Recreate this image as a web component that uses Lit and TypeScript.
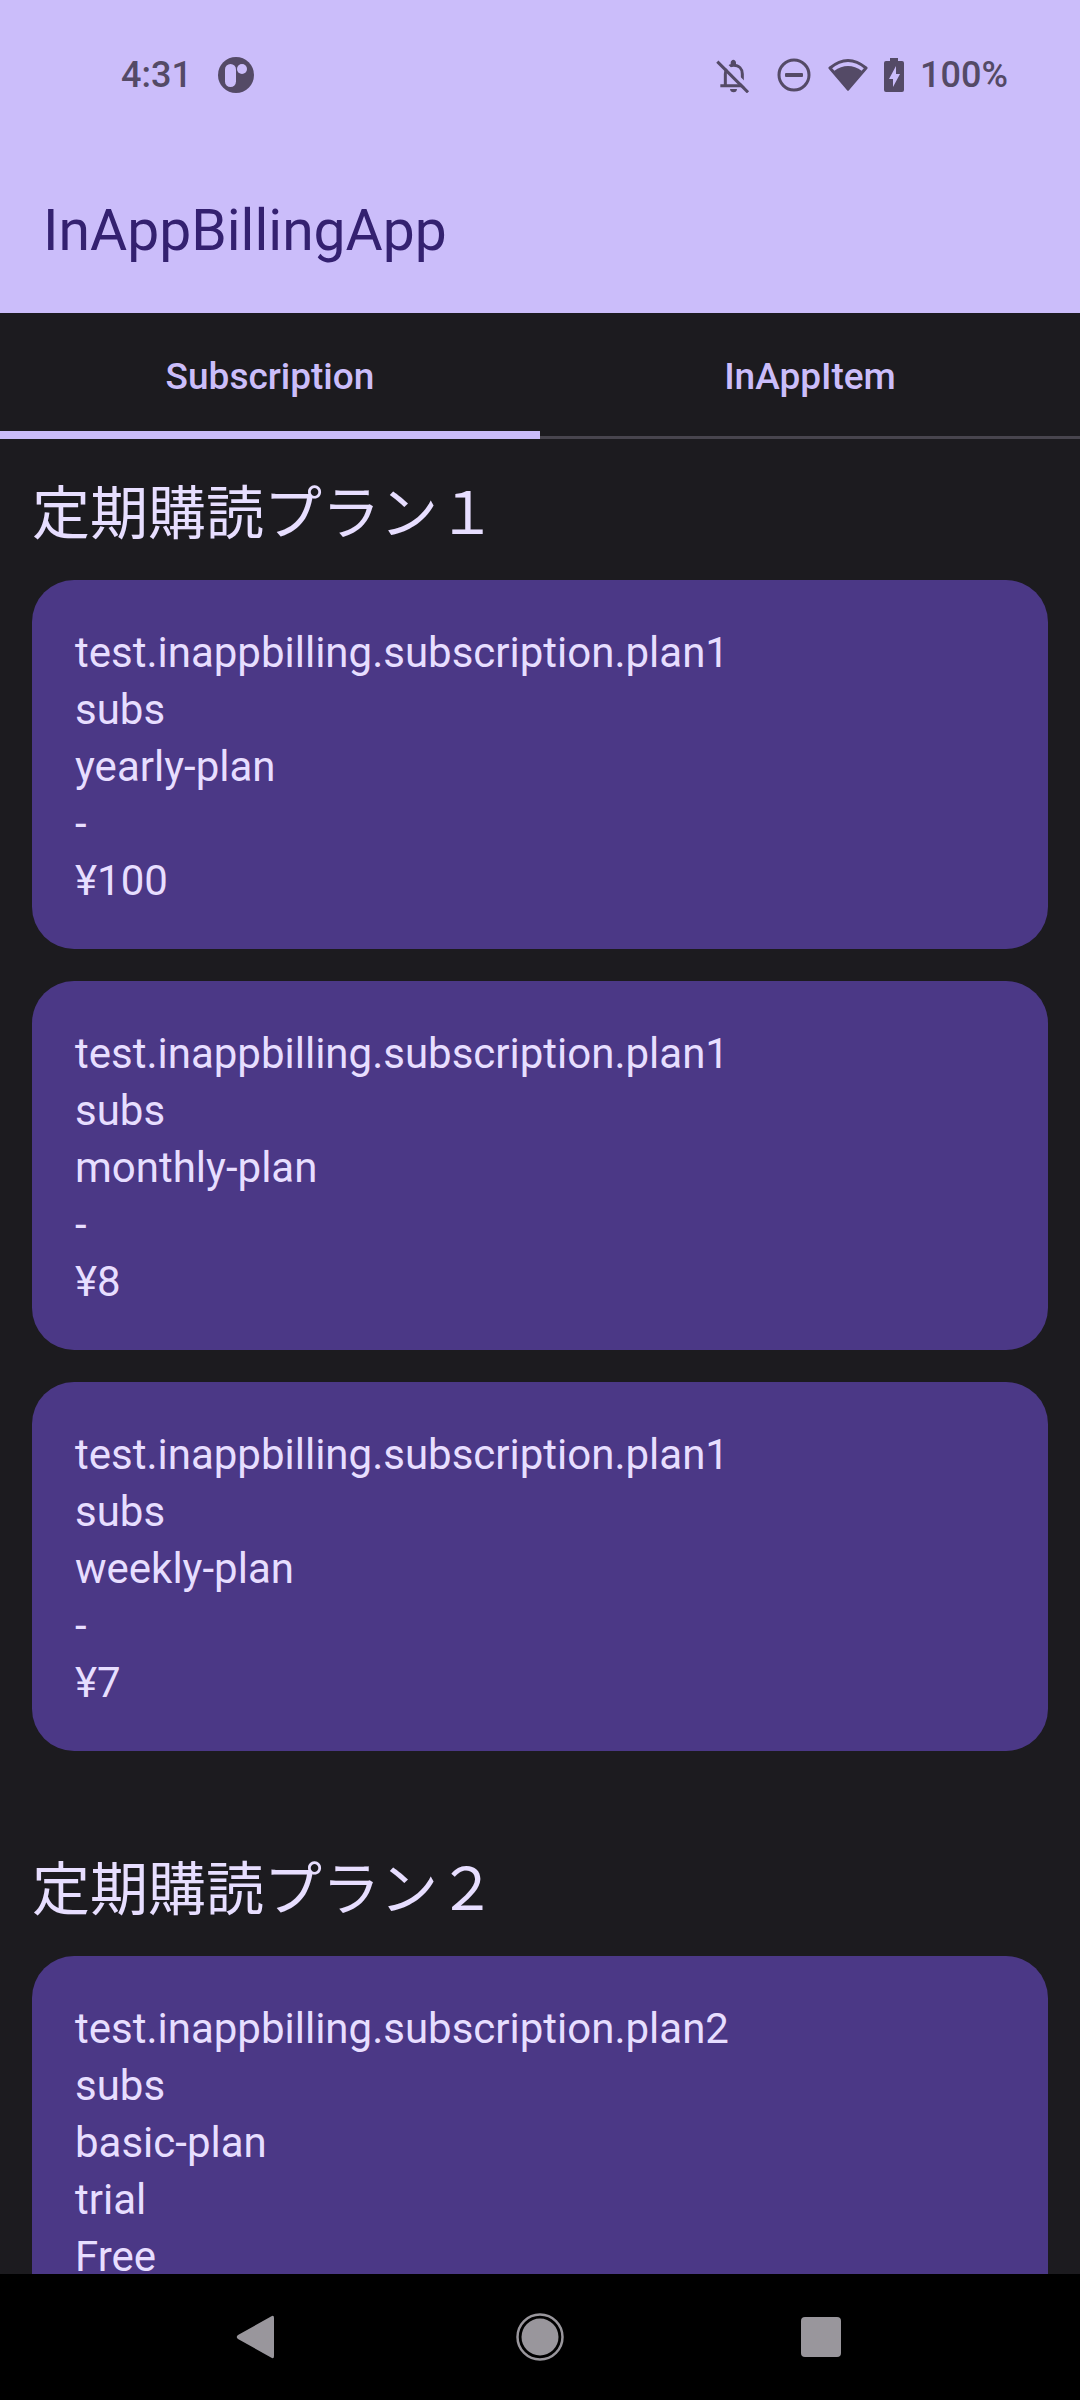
import { LitElement, html, css, svg } from "lit";
import { customElement, property, state } from "lit/decorators.js";
import { classMap } from "lit/directives/class-map.js";

interface Plan {
  title: string;
  offers: string[][];
}

const PLANS: Plan[] = [
  {
    title: "定期購読プラン１",
    offers: [
      ["test.inappbilling.subscription.plan1", "subs", "yearly-plan", "-", "¥100"],
      ["test.inappbilling.subscription.plan1", "subs", "monthly-plan", "-", "¥8"],
      ["test.inappbilling.subscription.plan1", "subs", "weekly-plan", "-", "¥7"],
    ],
  },
  {
    title: "定期購読プラン２",
    offers: [["test.inappbilling.subscription.plan2", "subs", "basic-plan", "trial", "Free"]],
  },
];

const TABS = ["Subscription", "InAppItem"];

@customElement("status-bar")
export class StatusBar extends LitElement {
  static styles = css`
    :host {
      display: flex;
      align-items: center;
      justify-content: space-between;
      height: 145px;
      padding: 4px 72px 0 121px;
      box-sizing: border-box;
      color: #544a66;
      font: 500 36px/40px Roboto, sans-serif;
    }
    .group {
      display: flex;
      align-items: center;
    }
    .left {
      gap: 26px;
    }
    .icons {
      display: flex;
      align-items: center;
      gap: 16px;
      margin-right: 16px;
    }
    svg {
      display: block;
      fill: currentColor;
    }
    .line {
      fill: none;
      stroke: currentColor;
    }
    .cut {
      fill: #cbbdfa;
    }
    .gap {
      fill: none;
      stroke: #cbbdfa;
    }
  `;

  render() {
    return html`
      <div class="group left">
        <span>4:31</span>
        <svg width="36" height="36" viewBox="0 0 36 36" aria-hidden="true">
          <circle cx="18" cy="18" r="18" />
          <rect class="cut" x="7" y="7" width="11" height="23" rx="5.5" />
          <circle class="cut" cx="24" cy="12" r="5" />
        </svg>
      </div>
      <div class="group">
        <div class="icons">
          <svg width="44" height="36" viewBox="0 0 132 108" aria-hidden="true">
            <path
              class="line"
              stroke-width="9"
              d="M28 87V51c0-15 9-26 25-26s26 11 26 26v36"
            />
            <path d="M44 23v-6c0-5 4-9 8-9s8 4 8 9v6zM13 82h78v9H13zM42 96h21c0 6-4 10-10 10s-11-4-11-10z" />
            <path class="gap" stroke-width="12" d="M8 3L101 96" />
            <path class="line" stroke-width="9" d="M4 14L96 106" />
          </svg>
          <svg width="36" height="36" viewBox="0 0 36 36" aria-hidden="true">
            <circle class="line" cx="18" cy="18" r="15" stroke-width="3" />
            <rect x="9" y="16" width="18" height="4" rx="1" />
          </svg>
          <svg width="40" height="36" viewBox="0 0 40 36" aria-hidden="true">
            <path class="line" stroke-width="3" stroke-linejoin="round" d="M2 11Q20-4 38 11L20 32Z" />
            <path d="M6 14Q20 4 34 14L20 34Z" />
          </svg>
          <svg width="20" height="36" viewBox="0 0 20 36" aria-hidden="true">
            <path d="M6 1h8v3h4q2 0 2 2v27q0 2-2 2H2q-2 0-2-2V6q0-2 2-2h4z" />
            <path class="cut" d="M12 9L5 22h4v8l7-13h-4z" />
          </svg>
        </div>
        <span>100%</span>
      </div>
    `;
  }
}

@customElement("offer-card")
export class OfferCard extends LitElement {
  static styles = css`
    :host {
      display: block;
      padding: 44px 43px 40px;
      border-radius: 42px;
      background: #4b3886;
      color: #e7deff;
      font: 400 42px/57px Roboto, sans-serif;
    }
    .row {
      margin: 0;
    }
  `;

  @property({ attribute: false }) rows: string[] = [];

  render() {
    return this.rows.map((row) => html`<p class="row">${row}</p>`);
  }
}

@customElement("navigation-bar")
export class NavigationBar extends LitElement {
  static styles = css`
    :host {
      display: flex;
      justify-content: center;
      height: 126px;
      padding: 0 11%;
      background: #000;
    }
    .key {
      flex: 1;
      display: grid;
      place-items: center;
      padding: 0;
      border: 0;
      background: none;
      color: #99969c;
    }
    svg {
      fill: currentColor;
    }
    .ring {
      fill: none;
      stroke: currentColor;
      stroke-width: 2.5;
    }
  `;

  render() {
    const keys = [
      {
        label: "Back",
        icon: svg`<path d="M37 4.500q3-2 3 1.500v38q0 3.500-3 1.500L4 27q-2.500-2 0-4z" />`,
      },
      {
        label: "Home",
        icon: svg`<circle class="ring" cx="25" cy="25" r="22.500" /><circle cx="25" cy="25" r="18.500" />`,
      },
      {
        label: "Recent apps",
        icon: svg`<rect x="5" y="5" width="40" height="40" rx="4" />`,
      },
    ];
    return keys.map(
      (key) => html`
        <button class="key" type="button" aria-label=${key.label}>
          <svg width="50" height="50" viewBox="0 0 50 50" aria-hidden="true">${key.icon}</svg>
        </button>
      `
    );
  }
}

@customElement("app-root")
export class AppRoot extends LitElement {
  static styles = css`
    :host {
      display: flex;
      flex-direction: column;
      height: 100vh;
      overflow: hidden;
      background: #1c1b1f;
      color: #e7deff;
      font-family: Roboto, "Noto Sans CJK JP", sans-serif;
    }
    .top,
    .tabs,
    navigation-bar {
      flex: none;
    }
    .top {
      background: #cbbdfa;
    }
    .title {
      margin: 0;
      padding: 52px 43px 48px;
      color: #342170;
      font: 400 57px/68px Roboto, sans-serif;
    }
    .tabs {
      display: flex;
      height: 126px;
    }
    .tab {
      flex: 1;
      padding: 2px 0 0;
      border: 0;
      background: none;
      box-shadow: inset 0 -3px #48454e;
      color: #cbbdfa;
      font: 500 37px/52px Roboto, sans-serif;
    }
    .active {
      box-shadow: inset 0 -8px #cbbdfa;
    }
    .content {
      flex: 1;
      min-height: 0;
      overflow: hidden;
    }
    .plan {
      display: flex;
      flex-direction: column;
      gap: 32px;
      padding: 32px 32px 64px;
    }
    .heading {
      margin: 0;
      font: 400 58px/77px "Noto Sans CJK JP", sans-serif;
    }
  `;

  @state() private selected = 0;

  render() {
    return html`
      <header class="top">
        <status-bar></status-bar>
        <h1 class="title">InAppBillingApp</h1>
      </header>
      <div class="tabs" role="tablist">
        ${TABS.map(
          (name, i) => html`
            <button
              type="button"
              role="tab"
              id="tab-${i}"
              aria-controls="panel"
              aria-selected=${this.selected === i ? "true" : "false"}
              class=${classMap({ tab: true, active: this.selected === i })}
              @click=${() => (this.selected = i)}
            >
              ${name}
            </button>
          `
        )}
      </div>
      <main class="content" id="panel" role="tabpanel" aria-labelledby="tab-${this.selected}">
        ${this.selected === 0
          ? PLANS.map(
              (plan) => html`
                <section class="plan">
                  <h2 class="heading">${plan.title}</h2>
                  ${plan.offers.map((rows) => html`<offer-card .rows=${rows}></offer-card>`)}
                </section>
              `
            )
          : null}
      </main>
      <navigation-bar></navigation-bar>
    `;
  }
}
